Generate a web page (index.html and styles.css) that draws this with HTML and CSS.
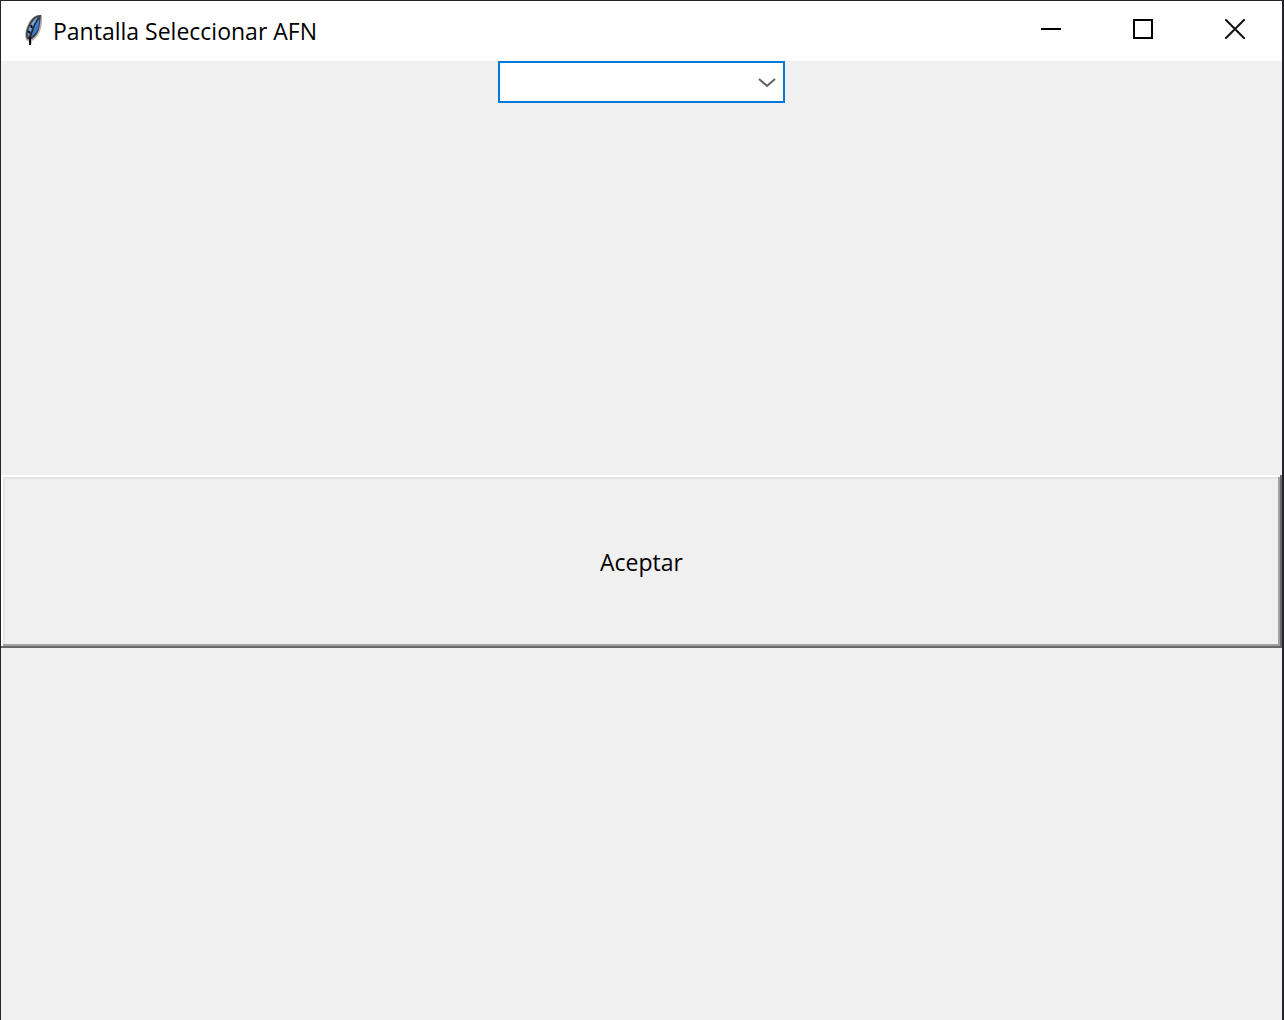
FILE: index.html
```html
<!DOCTYPE html>
<html lang="es">
<head>
<meta charset="utf-8">
<title>Pantalla Seleccionar AFN</title>
<link rel="stylesheet" href="styles.css">
</head>
<body>
<div class="window">
  <header class="titlebar">
    <svg class="feather" width="20" height="34" viewBox="0 0 20 34" aria-hidden="true">
      <path d="M19 1C14 0 9 3 6 8C3 14 1 20 3 26L7 28L8 32L9 27C14 24 18 18 19 9Z" fill="#b4b4b4"/>
      <path d="M18 1C13 1 9 4 6 10C3 16 2 21 4 25L7 26C13 23 16 18 17 10Z" fill="#3b4046"/>
      <path d="M15 3C12 4 9 8 7 12C5 16 4 20 5 23L8 17L11 10Z" fill="#79a6d8"/>
      <path d="M16 5C17 12 14 19 8 23L10 17L13 9Z" fill="#3f7dcc"/>
      <path d="M15 5L12 10L9 18L7 25" fill="none" stroke="#16202c" stroke-width="1"/>
      <path d="M8 11L9 14M5 17L7 19M7 23V31" fill="none" stroke="#0a0c10" stroke-width="2"/>
    </svg>
    <h1 class="title">Pantalla Seleccionar AFN</h1>
    <div class="controls">
      <button class="control" type="button" aria-label="Minimizar">
        <svg width="20" height="20" viewBox="0 0 20 20"><path d="M0 10H20" stroke="#000" stroke-width="2" shape-rendering="crispEdges"/></svg>
      </button>
      <button class="control" type="button" aria-label="Maximizar">
        <svg width="20" height="20" viewBox="0 0 20 20"><rect x="1" y="1" width="18" height="18" fill="none" stroke="#000" stroke-width="2"/></svg>
      </button>
      <button class="control" type="button" aria-label="Cerrar">
        <svg width="20" height="20" viewBox="0 0 20 20"><path d="M1 1L19 19M19 1L1 19" stroke="#111" stroke-width="2" stroke-linecap="square"/></svg>
      </button>
    </div>
  </header>
  <main class="content">
    <div class="combo">
      <select class="combo-select" aria-label="AFN">
        <option value=""></option>
      </select>
      <svg class="combo-arrow" width="18" height="12" viewBox="0 0 18 12" aria-hidden="true"><path d="M1 3L9 10L17 3" fill="none" stroke="#606060" stroke-width="2"/></svg>
    </div>
    <button class="accept" type="button">Aceptar</button>
  </main>
</div>
</body>
</html>
```
FILE: styles.css
```css
* {
  box-sizing: border-box;
}

body {
  margin: 0;
  font-family: "Open Sans", "Noto Sans", sans-serif;
  color: #000;
}

.window {
  display: flex;
  flex-direction: column;
  min-height: 100vh;
  border: solid #242426;
  border-width: 1px 2px 0 1px;
  background: #f0f0f0;
}

.titlebar {
  display: flex;
  align-items: center;
  height: 60px;
  padding-left: 22px;
  background: #fff;
}

.feather {
  margin-right: 10px;
}

.title {
  margin: 0;
  font-size: 23px;
  font-weight: 400;
  line-height: 32px;
}

.controls {
  display: flex;
  align-self: flex-start;
  margin-left: auto;
  padding-right: 1px;
}

.control {
  display: flex;
  align-items: center;
  justify-content: center;
  width: 92px;
  height: 56px;
  padding: 0;
  border: 0;
  background: transparent;
}

.content {
  display: flex;
  flex: 1;
  flex-direction: column;
  align-items: center;
}

.combo {
  display: grid;
  align-items: center;
  width: 287px;
}

.combo-select,
.combo-arrow {
  grid-area: 1 / 1;
}

.combo-select {
  width: 100%;
  height: 42px;
  padding: 0 36px 0 8px;
  border: 2px solid #0078d7;
  border-radius: 0;
  outline: 0;
  background: #fff;
  font: inherit;
  font-size: 23px;
  appearance: none;
}

.combo-arrow {
  justify-self: end;
  margin-right: 9px;
  pointer-events: none;
}

.accept {
  width: 100%;
  height: 173px;
  margin: auto 0;
  padding: 0;
  border: 0;
  background: #f0f0f0;
  box-shadow:
    inset -2px -2px #696969,
    inset 2px 2px #fff,
    inset -4px -4px #a0a0a0,
    inset 4px 4px #e3e3e3;
  color: #000;
  font-family: inherit;
  font-size: 23px;
  line-height: 32px;
}
```
